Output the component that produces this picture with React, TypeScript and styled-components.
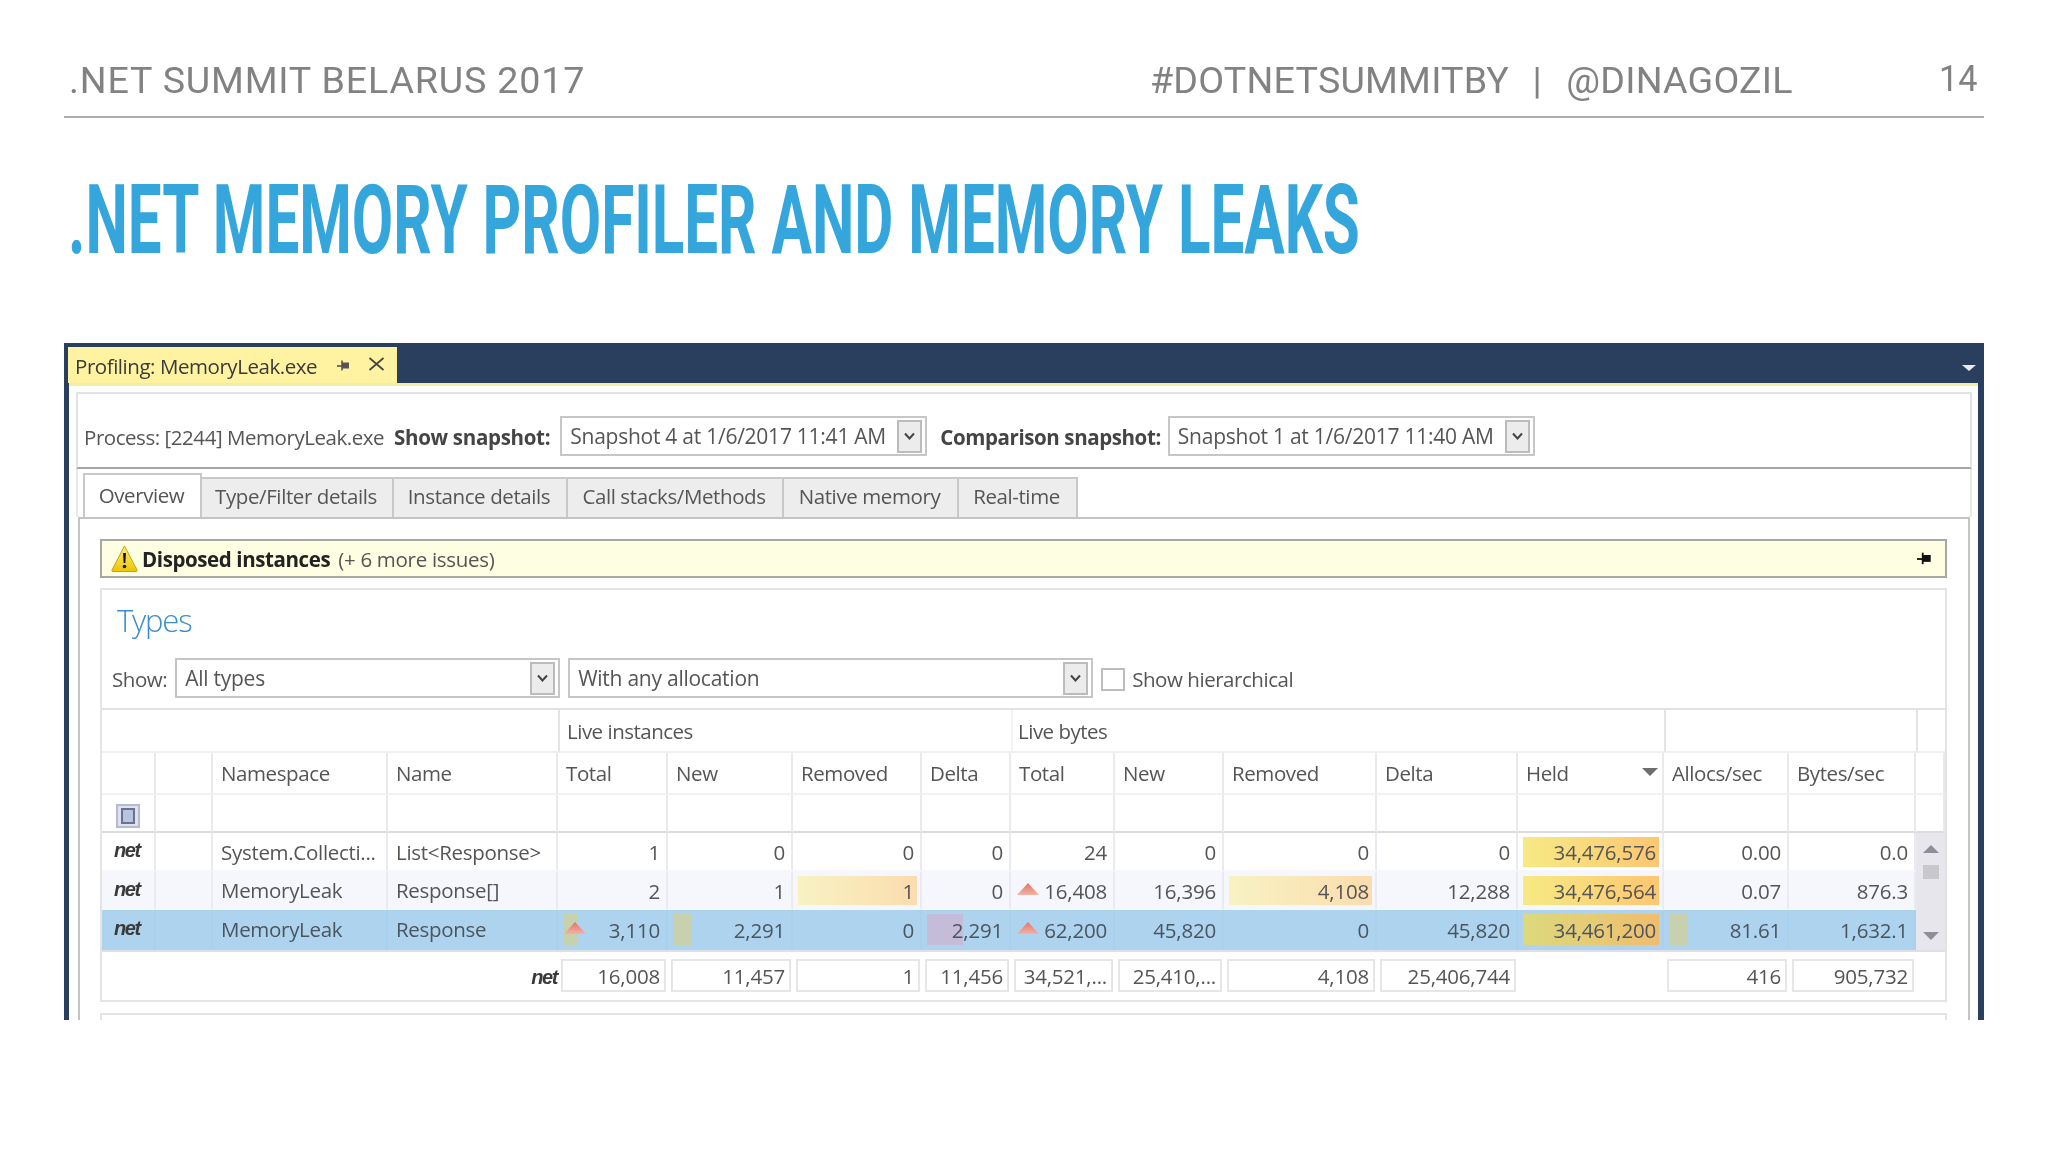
import React from 'react';
import styled, { createGlobalStyle } from 'styled-components';

const GlobalStyle = createGlobalStyle`
  html, body {
    margin: 0;
    padding: 0;
    background: #fff;
    overflow: hidden;
  }
  * {
    box-sizing: border-box;
  }
`;

type Heat = 'warm' | 'held' | 'heldSel' | 'green' | 'purple';

interface Value {
  v: string;
  heat?: Heat;
  fill?: number;
  up?: boolean;
}

interface Row {
  ns: string;
  name: string;
  values: Value[];
  tone: 'plain' | 'alt' | 'selected';
}

const rows: Row[] = [
  {
    ns: 'System.Collecti...',
    name: 'List<Response>',
    tone: 'plain',
    values: [
      { v: '1' }, { v: '0' }, { v: '0' }, { v: '0' },
      { v: '24' }, { v: '0' }, { v: '0' }, { v: '0' },
      { v: '34,476,576', heat: 'held' }, { v: '0.00' }, { v: '0.0' },
    ],
  },
  {
    ns: 'MemoryLeak',
    name: 'Response[]',
    tone: 'alt',
    values: [
      { v: '2' }, { v: '1' }, { v: '1', heat: 'warm' }, { v: '0' },
      { v: '16,408', up: true }, { v: '16,396' }, { v: '4,108', heat: 'warm' }, { v: '12,288' },
      { v: '34,476,564', heat: 'held' }, { v: '0.07' }, { v: '876.3' },
    ],
  },
  {
    ns: 'MemoryLeak',
    name: 'Response',
    tone: 'selected',
    values: [
      { v: '3,110', up: true, heat: 'green', fill: 15 }, { v: '2,291', heat: 'green', fill: 19 },
      { v: '0' }, { v: '2,291', heat: 'purple', fill: 36 },
      { v: '62,200', up: true }, { v: '45,820' }, { v: '0' }, { v: '45,820' },
      { v: '34,461,200', heat: 'heldSel' }, { v: '81.61', heat: 'green', fill: 18 }, { v: '1,632.1' },
    ],
  },
];

const subHeads = ['Total', 'New', 'Removed', 'Delta', 'Total', 'New', 'Removed', 'Delta'];
const totals = ['16,008', '11,457', '1', '11,456', '34,521,...', '25,410,...', '4,108', '25,406,744'];

const PinIcon: React.FC<{ size?: number; color?: string }> = ({ size = 14, color = '#555' }) => (
  <svg width={size} height={size} viewBox="0 0 14 14" fill="none">
    <path d="M0 7h5" stroke={color} strokeWidth="1.6" />
    <rect x="5" y="3.5" width="7" height="6" fill={color} />
    <path d="M5 1.5v10" stroke={color} strokeWidth="1.6" />
  </svg>
);

const Chevron: React.FC = () => (
  <svg width="11" height="8" viewBox="0 0 11 8" fill="none">
    <path d="M1 1.5l4.5 5 4.5-5" stroke="#444" strokeWidth="2" />
  </svg>
);

const WarningIcon: React.FC = () => (
  <svg width="27" height="27" viewBox="0 0 27 27">
    <defs>
      <linearGradient id="warnFill" x1="0" y1="0" x2="0" y2="1">
        <stop offset="0" stopColor="#fff27a" />
        <stop offset="1" stopColor="#ecc400" />
      </linearGradient>
    </defs>
    <path d="M13.5 1L26 25a1 1 0 0 1-1 1.5H2A1 1 0 0 1 1 25z" fill="url(#warnFill)" stroke="#c0a41c" strokeWidth="1" />
    <path d="M12 8h3l-.6 10h-1.8z" fill="#1a1a1a" />
    <circle cx="13.5" cy="21.5" r="1.8" fill="#1a1a1a" />
  </svg>
);

const UpTriangle: React.FC = () => (
  <svg width="22" height="12" viewBox="0 0 22 12">
    <defs>
      <linearGradient id="upFill" x1="0" y1="0" x2="0" y2="1">
        <stop offset="0" stopColor="#e5736a" />
        <stop offset="1" stopColor="#f2b2a4" />
      </linearGradient>
    </defs>
    <path d="M11 0l11 12H0z" fill="url(#upFill)" />
  </svg>
);

const ComboBox: React.FC<{ text: string; width: number }> = ({ text, width }) => (
  <Combo $width={width}>
    <ComboText>{text}</ComboText>
    <ComboButton>
      <Chevron />
    </ComboButton>
  </Combo>
);

const App: React.FC = () => {
  return (
    <>
      <GlobalStyle />
      <Slide>
        <SlideHeader>
          <EventName>.NET SUMMIT BELARUS 2017</EventName>
          <Handles>
            #DOTNETSUMMITBY<HandleBar>|</HandleBar>@DINAGOZIL
          </Handles>
          <PageNumber>14</PageNumber>
        </SlideHeader>
        <Title>.NET MEMORY PROFILER AND MEMORY LEAKS</Title>

        <Window>
          <TabStrip>
            <DocTab>
              <DocTabLabel>Profiling: MemoryLeak.exe</DocTabLabel>
              <PinIcon />
              <CloseGlyph>
                <svg width="17" height="14" viewBox="0 0 17 14" fill="none">
                  <path d="M1.5 1l14 12M15.5 1l-14 12" stroke="#444" strokeWidth="1.7" />
                </svg>
              </CloseGlyph>
            </DocTab>
            <OverflowArrow />
          </TabStrip>

          <WindowBody>
            <Toolbar>
              <ProcessLabel>Process: [2244] MemoryLeak.exe</ProcessLabel>
              <BoldLabel>Show snapshot:</BoldLabel>
              <ComboBox text="Snapshot 4 at 1/6/2017 11:41 AM" width={367} />
              <BoldLabel>Comparison snapshot:</BoldLabel>
              <ComboBox text="Snapshot 1 at 1/6/2017 11:40 AM" width={367} />
            </Toolbar>

            <TabRow>
              <ViewTab $active $width={119}>Overview</ViewTab>
              <ViewTab $width={192}>Type/Filter details</ViewTab>
              <ViewTab $width={174}>Instance details</ViewTab>
              <ViewTab $width={216}>Call stacks/Methods</ViewTab>
              <ViewTab $width={175}>Native memory</ViewTab>
              <ViewTab $width={119}>Real-time</ViewTab>
            </TabRow>

            <TabContent>
              <IssueBar>
                <WarningIcon />
                <IssueText>
                  <strong>Disposed instances</strong> (+ 6 more issues)
                </IssueText>
                <IssuePin>
                  <PinIcon size={16} color="#111" />
                </IssuePin>
              </IssueBar>

              <TypesPanel>
                <TypesHeading>Types</TypesHeading>
                <FilterRow>
                  <FilterLabel>Show:</FilterLabel>
                  <ComboBox text="All types" width={385} />
                  <ComboBox text="With any allocation" width={525} />
                  <CheckBox />
                  <FilterLabel>Show hierarchical</FilterLabel>
                </FilterRow>

                <Table>
                  <GroupCell $span={4} />
                  <GroupCell $span={4} $line>Live instances</GroupCell>
                  <GroupCell $span={5} $faint>Live bytes</GroupCell>
                  <GroupCell $span={2} $line />
                  <GroupCell $line />

                  <HeadCell />
                  <HeadCell />
                  <HeadCell>Namespace</HeadCell>
                  <HeadCell>Name</HeadCell>
                  {subHeads.map((label, i) => (
                    <HeadCell key={i}>{label}</HeadCell>
                  ))}
                  <HeadCell>
                    Held
                    <SortArrow />
                  </HeadCell>
                  <HeadCell>Allocs/sec</HeadCell>
                  <HeadCell>Bytes/sec</HeadCell>
                  <HeadCell />

                  <FilterCell>
                    <FilterToggle>
                      <FilterToggleInner />
                    </FilterToggle>
                  </FilterCell>
                  {Array.from({ length: 14 }).map((_, i) => (
                    <FilterCell key={i} />
                  ))}
                  <FilterCell />

                  {rows.map((row, r) => (
                    <React.Fragment key={row.name}>
                      <DataCell $tone={row.tone}>
                        <NetMark>net</NetMark>
                      </DataCell>
                      <DataCell $tone={row.tone} />
                      <TextCell $tone={row.tone}>{row.ns}</TextCell>
                      <TextCell $tone={row.tone}>{row.name}</TextCell>
                      {row.values.map((value, i) => (
                        <DataCell key={i} $tone={row.tone}>
                          <Amount $heat={value.heat} $fill={value.fill}>
                            {value.up && (
                              <UpSlot>
                                <UpTriangle />
                              </UpSlot>
                            )}
                            {value.v}
                          </Amount>
                        </DataCell>
                      ))}
                      {r === 0 && (
                        <ScrollTrack>
                          <ScrollUp />
                          <ScrollThumb />
                          <ScrollDown />
                        </ScrollTrack>
                      )}
                    </React.Fragment>
                  ))}

                  <FooterLead>
                    <NetMark>net</NetMark>
                  </FooterLead>
                  {totals.map((total, i) => (
                    <FooterCell key={i}>
                      <FooterBox>{total}</FooterBox>
                    </FooterCell>
                  ))}
                  <FooterCell />
                  <FooterCell>
                    <FooterBox>416</FooterBox>
                  </FooterCell>
                  <FooterCell>
                    <FooterBox>905,732</FooterBox>
                  </FooterCell>
                  <FooterCell />
                </Table>
              </TypesPanel>
              <NextPanel />
            </TabContent>
          </WindowBody>
        </Window>
      </Slide>
    </>
  );
};

export default App;

const uiFont = `'Open Sans', 'Noto Sans', sans-serif`;
const deckFont = `Roboto, 'Liberation Sans', sans-serif`;

const Slide = styled.div`
  width: 2048px;
  height: 1152px;
  padding: 0 64px;
  background: #fff;
  overflow: hidden;
`;

const SlideHeader = styled.header`
  display: flex;
  align-items: flex-end;
  height: 118px;
  padding: 0 5px 14px 5px;
  border-bottom: 2px solid #adadad;
  color: #828282;
  font-family: ${deckFont};
`;

const EventName = styled.div`
  width: 1092px;
  font-size: 37px;
  line-height: 42px;
  letter-spacing: 0.8px;
  white-space: nowrap;
  transform: scaleX(1.017);
  transform-origin: left center;
`;

const Handles = styled.div`
  width: 796px;
  font-size: 37px;
  line-height: 42px;
  letter-spacing: 0.2px;
  white-space: nowrap;
  transform: scaleX(1.017);
  transform-origin: left center;
`;

const HandleBar = styled.span`
  margin: 0 24px 0 23px;
`;

const PageNumber = styled.div`
  font-size: 36px;
  line-height: 42px;
  margin-bottom: 2px;
  transform: scaleX(0.95);
  transform-origin: left center;
`;

const Title = styled.h1`
  margin: 50px 0 0 4px;
  height: 110px;
  font-family: ${deckFont};
  font-size: 96px;
  line-height: 104px;
  font-weight: 700;
  color: #35a6dc;
  white-space: nowrap;
  transform: scaleX(0.626);
  transform-origin: left center;
`;

const Window = styled.section`
  height: 677px;
  margin-top: 65px;
  background: #2a3e5e;
  overflow: hidden;
  filter: blur(0.45px);
  font-family: ${uiFont};
  font-size: 20.5px;
  color: #555;
`;

const TabStrip = styled.div`
  display: flex;
  align-items: flex-end;
  justify-content: space-between;
  height: 40px;
  padding: 0 8px 0 4px;
`;

const DocTab = styled.div`
  display: flex;
  align-items: center;
  width: 329px;
  height: 36px;
  padding: 1px 12px 0 7px;
  background: #fff3a2;
  color: #3a3a3a;
`;

const DocTabLabel = styled.span`
  width: 262px;
  white-space: nowrap;
  letter-spacing: -0.45px;
`;

const CloseGlyph = styled.span`
  display: flex;
  margin: -4px 0 0 17px;
`;

const OverflowArrow = styled.span`
  width: 0;
  height: 0;
  margin-bottom: 12px;
  border-left: 7px solid transparent;
  border-right: 7px solid transparent;
  border-top: 6px solid #e8ecf2;
`;

const WindowBody = styled.div`
  height: 637px;
  margin: 0 6px 0 5px;
  padding: 6px 6px 0 7px;
  background: #fff;
  border-top: 3px solid #f4eea0;
`;

const Combo = styled.div<{ $width: number }>`
  display: flex;
  align-items: center;
  justify-content: space-between;
  flex: none;
  width: ${(props) => props.$width}px;
  height: 40px;
  padding: 2px 3px 2px 8px;
  background: #fff;
  border: 2px solid #c6c6c6;
`;

const ComboText = styled.span`
  white-space: nowrap;
  font-size: 21px;
  letter-spacing: -0.25px;
`;

const ComboButton = styled.span`
  display: flex;
  align-items: center;
  justify-content: center;
  width: 25px;
  height: 33px;
  background: #ececec;
  border: 2px solid #bcbcbc;
`;

const Toolbar = styled.div`
  display: flex;
  align-items: center;
  height: 77px;
  padding: 11px 0 0 6px;
  border-top: 2px solid #e2e2e2;
  border-left: 2px solid #e2e2e2;
  border-right: 2px solid #e2e2e2;
  border-bottom: 2px solid #a6a6a6;
`;

const ProcessLabel = styled.span`
  width: 310px;
  padding-top: 2px;
  white-space: nowrap;
  letter-spacing: -0.45px;
`;

const BoldLabel = styled.span`
  margin-right: 10px;
  padding-top: 2px;
  font-weight: 700;
  color: #444;
  white-space: nowrap;
  letter-spacing: -0.3px;

  ${Combo} + & {
    margin-left: 13px;
    margin-right: 7px;
    letter-spacing: -0.4px;
  }
`;

const TabRow = styled.div`
  display: flex;
  align-items: flex-end;
  height: 48px;
  padding-left: 5px;
  border-left: 2px solid #e8e8e8;
  border-right: 2px solid #e8e8e8;
`;

const ViewTab = styled.div<{ $active?: boolean; $width: number }>`
  display: flex;
  align-items: center;
  justify-content: center;
  width: ${(props) => props.$width}px;
  height: ${(props) => (props.$active ? 44 : 40)}px;
  padding: 0 2px ${(props) => (props.$active ? 2 : 4)}px 0;
  background: ${(props) => (props.$active ? '#fff' : '#ededed')};
  border: 2px solid #c8c8c8;
  border-left-width: ${(props) => (props.$active ? 2 : 0)}px;
  border-bottom: none;
  white-space: nowrap;
  letter-spacing: -0.4px;
`;

const TabContent = styled.div`
  height: 600px;
  margin: 0 2px 0 2px;
  padding: 20px 21px 0 20px;
  border: 2px solid #c4c4c4;
  border-bottom: none;
`;

const IssueBar = styled.div`
  display: flex;
  align-items: center;
  height: 39px;
  padding-left: 9px;
  background: #fdfee2;
  border: 2px solid #a8a8a0;
`;

const IssueText = styled.span`
  margin-left: 4px;
  padding-top: 1px;
  white-space: nowrap;
  letter-spacing: -0.3px;

  strong {
    margin-right: 3px;
    color: #222;
    letter-spacing: -0.4px;
  }
`;

const IssuePin = styled.span`
  display: flex;
  margin-left: auto;
  margin-right: 12px;
`;

const TypesPanel = styled.div`
  height: 414px;
  margin-top: 10px;
  border: 2px solid #e4e4e4;
`;

const TypesHeading = styled.h2`
  height: 68px;
  margin: 0;
  padding: 8px 0 0 15px;
  font-size: 31px;
  line-height: 44px;
  font-weight: 300;
  color: #3a8ccd;
  letter-spacing: -1.2px;
`;

const FilterRow = styled.div`
  display: flex;
  align-items: center;
  height: 40px;
  margin-bottom: 10px;
  padding: 2px 0 0 10px;

  ${Combo} {
    margin-top: -2px;
  }

  ${Combo} + ${Combo} {
    margin-left: 8px;
  }
`;

const FilterLabel = styled.span`
  margin-right: 8px;
  white-space: nowrap;
  letter-spacing: -0.45px;
`;

const CheckBox = styled.span`
  width: 24px;
  height: 23px;
  margin: 0 7px 0 8px;
  background: #fff;
  border: 2px solid #bdbdbd;
`;

const Table = styled.div`
  display: grid;
  grid-template-columns: 54px 57px 175px 170px 110px 125px 129px 89px 104px 109px 153px 141px 146px 125px 127px 29px;
  grid-template-rows: 43px 42px 38px 39px 38px 40px 50px;
  border-top: 2px solid #e2e2e2;
  margin-top: 0;
`;

const GroupCell = styled.div<{ $span?: number; $line?: boolean; $faint?: boolean }>`
  grid-column: span ${(props) => props.$span ?? 1};
  display: flex;
  align-items: center;
  padding-left: ${(props) => (props.$faint ? 5 : 7)}px;
  border-bottom: 2px solid #f0f0f0;
  border-left: ${(props) =>
    props.$line ? '2px solid #e4e4e8' : props.$faint ? '2px solid #f4f4f6' : 'none'};
  letter-spacing: -0.5px;
`;

const HeadCell = styled.div`
  position: relative;
  display: flex;
  align-items: center;
  padding-left: 8px;
  border-right: 2px solid #e9e9ee;
  border-bottom: 2px solid #f2f2f2;
  white-space: nowrap;
  letter-spacing: -0.4px;
`;

const SortArrow = styled.span`
  position: absolute;
  right: 2px;
  top: 15px;
  width: 0;
  height: 0;
  margin-right: 2px;
  border-left: 8px solid transparent;
  border-right: 8px solid transparent;
  border-top: 8px solid #6e6e6e;
`;

const FilterCell = styled.div`
  display: flex;
  align-items: center;
  padding-left: 14px;
  border-right: 2px solid #e9e9ee;
  border-bottom: 2px solid #dcdcdc;
`;

const FilterToggle = styled.span`
  display: flex;
  align-items: center;
  justify-content: center;
  width: 24px;
  height: 24px;
  margin-top: 6px;
  background: #dfe2ee;
  border: 2px solid #b6bad0;
`;

const FilterToggleInner = styled.span`
  width: 14px;
  height: 16px;
  background: #b9c2e0;
  border: 2px solid #6c7090;
`;

const toneBackground = {
  plain: '#fff',
  alt: '#f6f7fd',
  selected: '#aed3ee',
};

const DataCell = styled.div<{ $tone: keyof typeof toneBackground }>`
  display: flex;
  align-items: stretch;
  min-width: 0;
  background: ${(props) => toneBackground[props.$tone]};
  border-right: 2px solid ${(props) => (props.$tone === 'selected' ? '#a9d0ec' : '#eaeaf0')};
  border-bottom: 2px solid ${(props) => (props.$tone === 'selected' ? '#aed3ee' : '#f6f7fd')};
  color: ${(props) => (props.$tone === 'selected' ? '#4a5560' : '#555')};
`;

const TextCell = styled(DataCell)`
  align-items: center;
  padding-left: 8px;
  white-space: nowrap;
  letter-spacing: -0.3px;
`;

const heatGradient = {
  warm: 'linear-gradient(90deg, #f8f2c2, #fbdcae)',
  held: 'linear-gradient(90deg, #f6ea84, #fdc672)',
  heldSel: 'linear-gradient(90deg, #dcd97c, #f0bd6e)',
  green: 'linear-gradient(90deg, #c8d1ae, #c8d1ae)',
  purple: 'linear-gradient(90deg, #c4bcd9, #c4bcd9)',
};

const Amount = styled.div<{ $heat?: Heat; $fill?: number }>`
  display: flex;
  align-items: center;
  justify-content: flex-end;
  flex: 1;
  min-width: 0;
  margin: 4px 3px 3px 5px;
  padding-right: 3px;
  white-space: nowrap;
  letter-spacing: -0.2px;
  background-image: ${(props) => (props.$heat ? heatGradient[props.$heat] : 'none')};
  background-repeat: no-repeat;
  background-size: ${(props) => (props.$fill ? `${props.$fill}px 100%` : '100% 100%')};
`;

const UpSlot = styled.span`
  display: flex;
  margin-right: auto;
  margin-bottom: 4px;
  padding-left: 1px;
`;

const NetMark = styled.span`
  align-self: center;
  margin-left: 12px;
  margin-top: -2px;
  font-family: 'Liberation Sans', sans-serif;
  font-size: 20px;
  font-style: italic;
  font-weight: 700;
  letter-spacing: -1.4px;
  color: #3a3a3a;
`;

const ScrollTrack = styled.div`
  grid-row: 4 / span 3;
  grid-column: 16;
  display: flex;
  flex-direction: column;
  align-items: center;
  padding-top: 12px;
  background: #e6e6ec;
`;

const ScrollUp = styled.span`
  width: 0;
  height: 0;
  border-left: 8px solid transparent;
  border-right: 8px solid transparent;
  border-bottom: 8px solid #8e8e98;
`;

const ScrollThumb = styled.span`
  width: 16px;
  height: 14px;
  margin-top: 12px;
  background: #c8c8cc;
`;

const ScrollDown = styled.span`
  width: 0;
  height: 0;
  margin-top: 53px;
  border-left: 8px solid transparent;
  border-right: 8px solid transparent;
  border-top: 8px solid #8e8e98;
`;

const FooterLead = styled.div`
  grid-column: span 4;
  display: flex;
  justify-content: flex-end;
  padding: 5px 1px 0 0;
  border-top: 2px solid #e0e0e4;
`;

const FooterCell = styled.div`
  display: flex;
  padding: 7px 2px 8px 3px;
  border-top: 2px solid #e0e0e4;
`;

const FooterBox = styled.div`
  display: flex;
  align-items: center;
  justify-content: flex-end;
  flex: 1;
  min-width: 0;
  padding-right: 4px;
  background: #fff;
  border: 2px solid #e6e6e6;
  white-space: nowrap;
  letter-spacing: -0.2px;
`;

const NextPanel = styled.div`
  height: 30px;
  margin-top: 11px;
  border: 2px solid #e4e4e4;
  border-bottom: none;
`;
